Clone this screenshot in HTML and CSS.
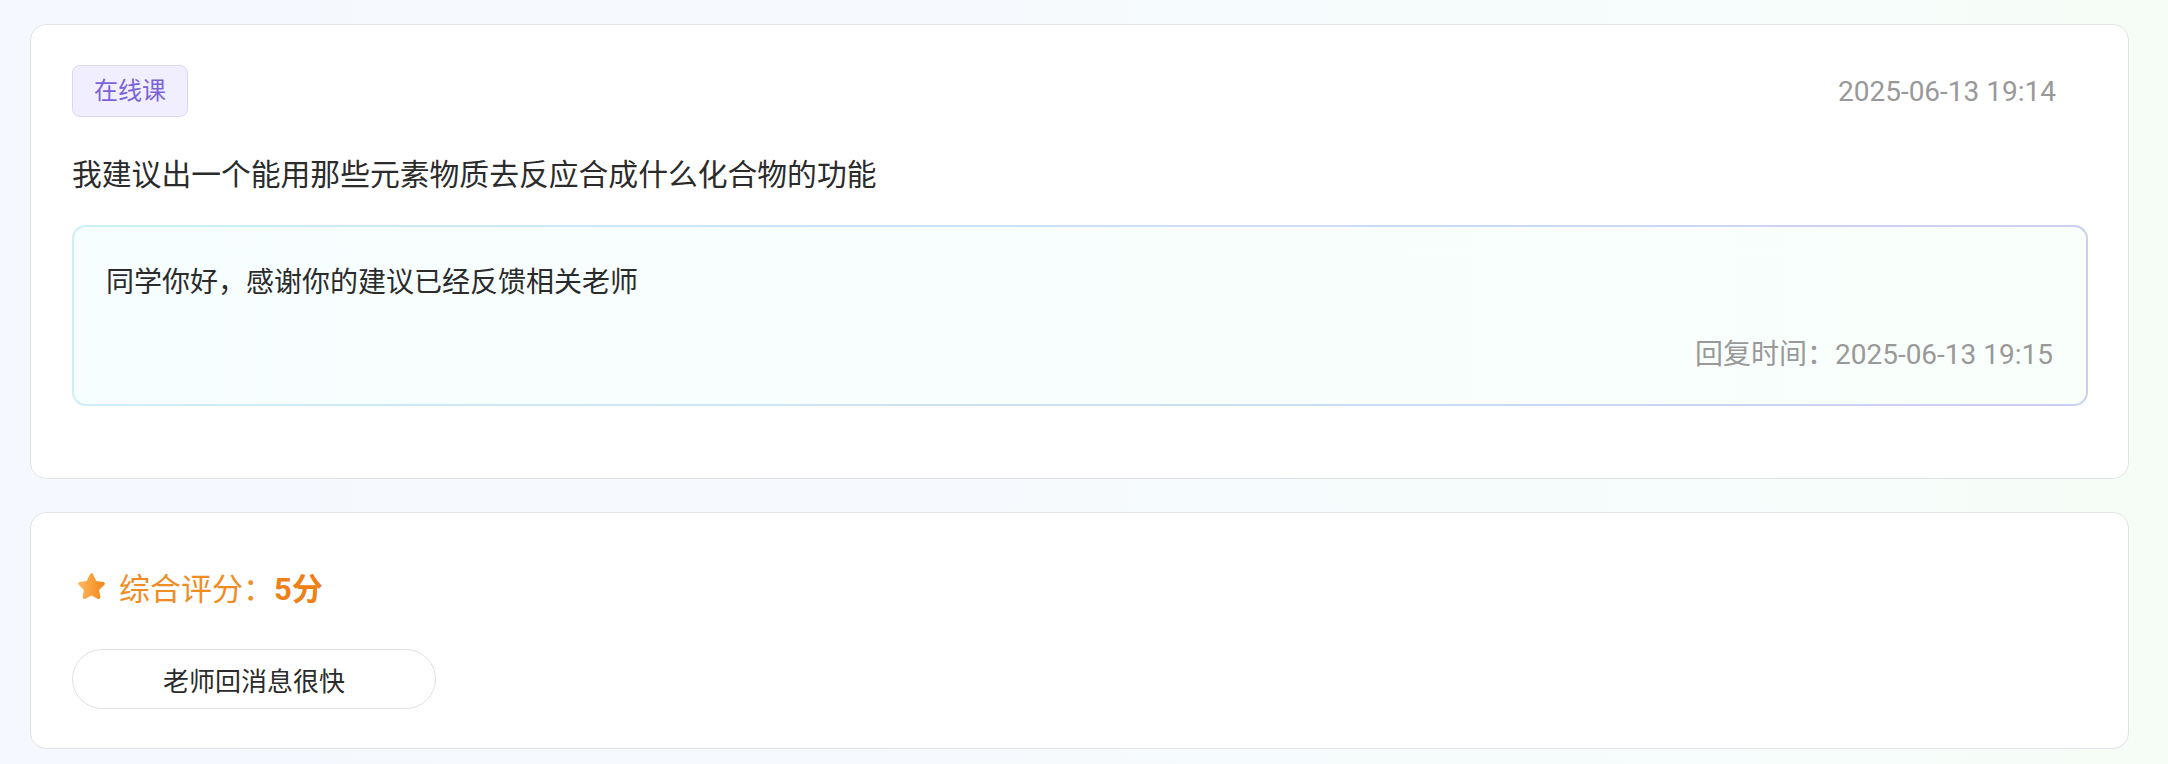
FILE: index.html
```html
<!DOCTYPE html>
<html lang="zh">
<head>
<meta charset="utf-8">
<title>反馈详情</title>
<link rel="stylesheet" href="styles.css">
</head>
<body>
<div class="page">
  <section class="card card-feedback">
    <div class="card-head">
      <span class="tag">在线课</span>
      <span class="date">2025-06-13 19:14</span>
    </div>
    <p class="question">我建议出一个能用那些元素物质去反应合成什么化合物的功能</p>
    <div class="reply">
      <p class="reply-text">同学你好，感谢你的建议已经反馈相关老师</p>
      <p class="reply-time">回复时间：2025-06-13 19:15</p>
    </div>
  </section>
  <section class="card card-rating">
    <div class="rating">
      <svg class="star" viewBox="0 0 32 32" width="33" height="33" aria-hidden="true">
        <defs>
          <linearGradient id="starGrad" x1="0" y1="0" x2="1" y2="0">
            <stop offset="0" stop-color="#fdb95f"/>
            <stop offset="1" stop-color="#f3861a"/>
          </linearGradient>
        </defs>
        <path d="M16 3.2c.7 0 1.2.4 1.5 1l3.1 6.4 7 1c1.3.2 1.8 1.8.9 2.7l-5.1 5 1.2 7c.2 1.3-1.1 2.3-2.3 1.7L16 24.7l-6.3 3.3c-1.2.6-2.5-.4-2.3-1.7l1.2-7-5.1-5c-.9-.9-.4-2.5.9-2.7l7-1 3.1-6.4c.3-.6.8-1 1.5-1z" fill="url(#starGrad)"/>
      </svg>
      <span class="rating-label">综合评分：</span><span class="rating-score">5分</span>
    </div>
    <div class="pills">
      <span class="pill">老师回消息很快</span>
    </div>
  </section>
</div>
</body>
</html>
```
FILE: styles.css
```css
* { box-sizing: border-box; }
html, body { margin: 0; padding: 0; }
body {
  min-height: 764px;
  background: linear-gradient(90deg, #f5f8fe 0%, #f6fafd 50%, #f6fdfb 85%, #f6fdf6 100%);
  font-family: Roboto, "Noto Sans CJK SC", sans-serif;
  color: #2b2b2b;
}
.page {
  display: flex;
  flex-direction: column;
  gap: 33px;
  padding: 24px 39px 15px 30px;
}
.card {
  background: #fff;
  border: 1px solid #e2e3e7;
  border-radius: 16px;
}
.card-feedback { padding: 40px 40px 72px 41px; }
.card-head {
  display: flex;
  justify-content: space-between;
  align-items: center;
}
.tag {
  display: inline-block;
  height: 52px;
  line-height: 50px;
  padding: 0 21px;
  font-size: 24px;
  color: #7a63d8;
  background: #f1efff;
  border: 1px solid #ddd7f7;
  border-radius: 8px;
}
.date {
  margin-right: 32px;
  font-size: 28px;
  color: #999;
}
.question {
  margin: 35px 0 0;
  font-size: 29.8px;
  line-height: 45px;
  color: #2b2b2b;
}
.reply {
  margin-top: 28px;
  height: 181px;
  padding: 35px 33px 29px 32px;
  border: 2px solid transparent;
  border-radius: 14px;
  background:
    linear-gradient(90deg, #f7feff, #f9fffb) padding-box,
    linear-gradient(90deg, #cdf0f5, #cbcff1) border-box;
}
.reply-text {
  margin: 0;
  font-size: 28px;
  line-height: 42px;
  color: #2b2b2b;
}
.reply-time {
  margin: 31px 0 0;
  text-align: right;
  font-size: 28px;
  line-height: 40px;
  color: #999;
}
.card-rating { padding: 51px 40px 39px 41px; }
.rating {
  display: flex;
  align-items: center;
  height: 44px;
  color: #f08c24;
  font-size: 31px;
}
.star { margin: 0 11px 0 3px; flex: none; }
.rating-score { font-weight: 700; color: #ef8015; }
.pills {
  display: flex;
  gap: 16px;
  margin-top: 41px;
}
.pill {
  display: inline-flex;
  align-items: center;
  justify-content: center;
  width: 364px;
  height: 60px;
  font-size: 26px;
  color: #2b2b2b;
  border: 1px solid #e0e0e0;
  border-radius: 30px;
  background: #fff;
}
```
